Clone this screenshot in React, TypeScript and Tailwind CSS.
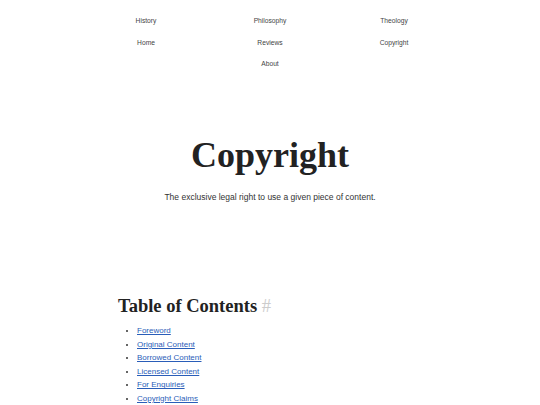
import React from 'react';

const navLinks = ['History', 'Philosophy', 'Theology', 'Home', 'Reviews', 'Copyright', 'About'];

const contents = [
  'Foreword',
  'Original Content',
  'Borrowed Content',
  'Licensed Content',
  'For Enquiries',
  'Copyright Claims',
];

export default function App() {
  return (
    <div className="min-h-screen bg-white text-[#222]" style={{ fontFamily: '"Liberation Sans", Arial, sans-serif' }}>
      {/* top navigation */}
      <nav className="mx-auto w-[372px] pt-[15px]">
        <ul className="flex flex-wrap justify-center gap-y-[10px]">
          {navLinks.map((link) => (
            <li key={link} className="w-1/3 text-center text-[6.7px] leading-[11.5px] text-[#444]">
              {link}
            </li>
          ))}
        </ul>
      </nav>

      {/* hero */}
      <header className="mt-[65px] text-center">
        <h1 className="text-[36px] font-bold leading-[40px] text-[#222]" style={{ fontFamily: '"Liberation Serif", "Times New Roman", serif' }}>
          Copyright
        </h1>
        <p className="mt-[16px] text-[8.5px] text-[#333]">The exclusive legal right to use a given piece of content.</p>
      </header>

      {/* table of contents */}
      <section className="ml-[118px] mt-[92px]">
        <h2 className="text-[18.5px] font-bold leading-[22px] text-[#222]" style={{ fontFamily: '"Liberation Serif", "Times New Roman", serif' }}>
          Table of Contents <span className="font-normal text-[#ccc]">#</span>
        </h2>
        <ul className="mt-[7px] list-disc pl-[19px] text-[8px] leading-[13.5px]">
          {contents.map((item) => (
            <li key={item} className="marker:text-[#333]">
              <a href="#" className="text-[#2a5db8] underline">
                {item}
              </a>
            </li>
          ))}
        </ul>
      </section>
    </div>
  );
}
